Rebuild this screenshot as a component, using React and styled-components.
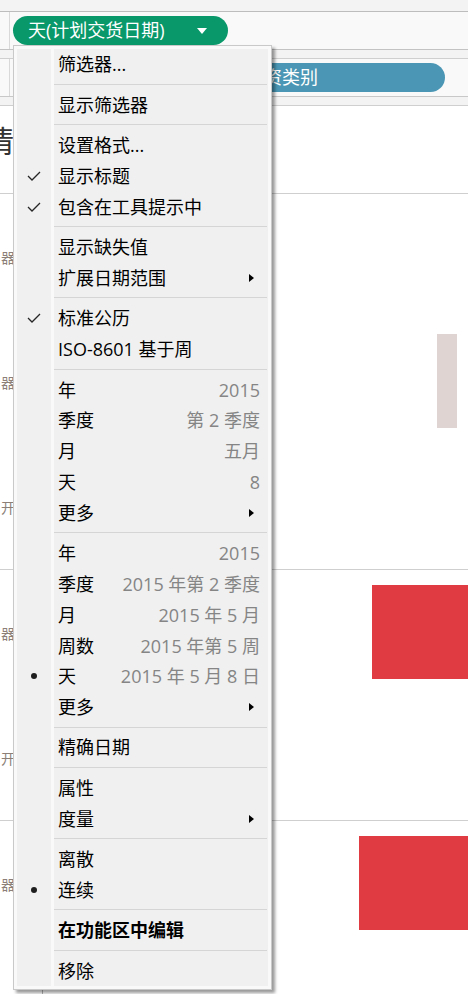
import React from 'react';
import styled, { createGlobalStyle } from 'styled-components';

const GlobalStyle = createGlobalStyle`
  html, body {
    margin: 0;
    padding: 0;
    background: #ffffff;
  }
  body {
    font-family: "Open Sans", "Noto Sans CJK SC", sans-serif;
    overflow: hidden;
  }
`;

const Page = styled.div`
  position: relative;
  width: 468px;
  height: 994px;
  display: flex;
  flex-direction: column;
  overflow: hidden;
`;

const TopStrip = styled.div`
  height: 11px;
  background: #f3f3f3;
  border-bottom: 1px solid #bdbdbd;
`;

const Shelf = styled.div`
  height: 37px;
  background: #f9f9f9;
  border-bottom: 1px solid ${p => p.$line};
  display: flex;
  align-items: flex-start;
`;

const ShelfHandle = styled.div`
  width: 9px;
  align-self: stretch;
  border-right: 1px solid #d9d9d9;
`;

const ShelfGap = styled.div`
  height: 8px;
  background: #f3f3f3;
  border-bottom: 1px solid #cfcfcf;
`;

const Pill = styled.div`
  box-sizing: border-box;
  margin-top: 4px;
  margin-left: ${p => p.$offset}px;
  width: ${p => p.$width}px;
  height: 29px;
  padding-left: ${p => p.$pad}px;
  border-radius: 15px;
  background: ${p => p.$color};
  color: #ffffff;
  font-size: 18px;
  line-height: 29px;
  display: flex;
  align-items: center;
  white-space: nowrap;
`;

const PillCaret = styled.span`
  margin-left: auto;
  margin-right: 21px;
  width: 0;
  height: 0;
  border-left: 5px solid transparent;
  border-right: 5px solid transparent;
  border-top: 6px solid #ffffff;
`;

const Table = styled.div`
  flex: 1;
  display: flex;
  flex-direction: column;
  background: #ffffff;
`;

const TitleBand = styled.div`
  height: 87px;
  border-bottom: 1px solid #cfcfcf;
  overflow: hidden;
`;

const Title = styled.div`
  margin-left: -16px;
  padding-top: 20px;
  font-size: 30px;
  line-height: 1;
  color: #333333;
`;

const Section = styled.div`
  border-bottom: 1px solid #cfcfcf;
`;

const Row = styled.div`
  height: 125px;
  display: grid;
  grid-template-columns: 43px 1fr;
`;

const Filler = styled.div`
  flex: 1;
  display: grid;
  grid-template-columns: 43px 1fr;
`;

const Label = styled.div`
  border-right: 1px solid #b4b4b4;
  display: flex;
  align-items: center;
  padding-left: 1px;
  font-size: 14px;
  color: #8c7f78;
  white-space: nowrap;
  overflow: hidden;
`;

const BarCell = styled.div`
  padding: 15px 0;
`;

const Bar = styled.div`
  height: 94px;
  background: ${p => p.$color};
`;

const Menu = styled.div`
  position: absolute;
  left: 13px;
  top: 45px;
  width: 259px;
  box-sizing: border-box;
  padding: 3px;
  border: 1px solid #c9c9c9;
  background: #f9f9f9;
  box-shadow: 3px 3px 3px rgba(0, 0, 0, 0.4);
`;

const MenuInner = styled.div`
  background: #f0f0f0;
`;

const Item = styled.div`
  display: grid;
  grid-template-columns: 34px 1fr;
  height: 30.8px;
`;

const Gutter = styled.div`
  display: flex;
  align-items: center;
  justify-content: center;
`;

const ItemBody = styled.div`
  border-left: 3px solid #f9f9f9;
  display: flex;
  align-items: center;
  padding: 0 8px 0 4px;
  font-size: 18px;
  line-height: 30px;
  color: #000000;
  font-weight: ${p => (p.$bold ? 700 : 400)};
  white-space: nowrap;
`;

const Value = styled.span`
  margin-left: auto;
  color: #858585;
`;

const SubArrow = styled.span`
  margin-left: auto;
  margin-right: 6px;
  width: 0;
  height: 0;
  border-top: 4px solid transparent;
  border-bottom: 4px solid transparent;
  border-left: 5px solid #000000;
`;

const Separator = styled.div`
  display: grid;
  grid-template-columns: 34px 1fr;
  height: 9.6px;
`;

const SeparatorLine = styled.div`
  border-left: 3px solid #f9f9f9;
  &::after {
    content: '';
    display: block;
    margin-top: 4px;
    margin-right: 1px;
    height: 1px;
    background: #d5d5d5;
  }
`;

const Dot = styled.span`
  width: 6px;
  height: 6px;
  border-radius: 50%;
  background: #1e1e1e;
`;

const Check = () => (
  <svg width="14" height="10" viewBox="0 0 14 10">
    <polyline points="1,5 5,9 13,1" fill="none" stroke="#262626" strokeWidth="1.3" />
  </svg>
);

const menuGroups = [
  [{ label: '筛选器...' }],
  [{ label: '显示筛选器' }],
  [
    { label: '设置格式...' },
    { label: '显示标题', mark: 'check' },
    { label: '包含在工具提示中', mark: 'check' },
  ],
  [{ label: '显示缺失值' }, { label: '扩展日期范围', sub: true }],
  [{ label: '标准公历', mark: 'check' }, { label: 'ISO-8601 基于周' }],
  [
    { label: '年', value: '2015' },
    { label: '季度', value: '第 2 季度' },
    { label: '月', value: '五月' },
    { label: '天', value: '8' },
    { label: '更多', sub: true },
  ],
  [
    { label: '年', value: '2015' },
    { label: '季度', value: '2015 年第 2 季度' },
    { label: '月', value: '2015 年 5 月' },
    { label: '周数', value: '2015 年第 5 周' },
    { label: '天', value: '2015 年 5 月 8 日', mark: 'dot' },
    { label: '更多', sub: true },
  ],
  [{ label: '精确日期' }],
  [{ label: '属性' }, { label: '度量', sub: true }],
  [{ label: '离散' }, { label: '连续', mark: 'dot' }],
  [{ label: '在功能区中编辑', bold: true }],
  [{ label: '移除' }],
];

const sections = [
  [
    { label: '器材' },
    { label: '器材', bar: { left: 394, width: 20, color: '#dfd4d2' } },
    { label: '开关' },
  ],
  [
    { label: '器材', bar: { left: 329, width: 96, color: '#e03a42' } },
    { label: '开关' },
  ],
];

const MenuItem = ({ item }) => (
  <Item>
    <Gutter>
      {item.mark === 'check' && <Check />}
      {item.mark === 'dot' && <Dot />}
    </Gutter>
    <ItemBody $bold={item.bold}>
      {item.label}
      {item.value && <Value>{item.value}</Value>}
      {item.sub && <SubArrow />}
    </ItemBody>
  </Item>
);

const TableRow = ({ row }) => (
  <Row>
    <Label>{row.label}</Label>
    <BarCell>
      {row.bar && (
        <Bar
          $color={row.bar.color}
          style={{ marginLeft: row.bar.left, width: row.bar.width }}
        />
      )}
    </BarCell>
  </Row>
);

export default function App() {
  return (
    <Page>
      <GlobalStyle />
      <TopStrip />
      <Shelf $line="#c3c3c3">
        <ShelfHandle />
        <Pill $color="#08986a" $offset={3} $width={215} $pad={15}>
          天(计划交货日期)
          <PillCaret />
        </Pill>
      </Shelf>
      <ShelfGap />
      <Shelf $line="#c8c8c8">
        <ShelfHandle />
        <Pill $color="#4a96b4" $offset={222} $width={213} $pad={14}>
          物资类别
        </Pill>
      </Shelf>
      <ShelfGap />

      <Table>
        <TitleBand>
          <Title>情</Title>
        </TitleBand>
        {sections.map((rows, i) => (
          <Section key={i}>
            {rows.map((row, j) => (
              <TableRow key={j} row={row} />
            ))}
          </Section>
        ))}
        <TableRow row={{ label: '器材', bar: { left: 316, width: 109, color: '#e03a42' } }} />
        <Filler>
          <Label />
          <div />
        </Filler>
      </Table>

      <Menu>
        <MenuInner>
          {menuGroups.map((group, i) => (
            <React.Fragment key={i}>
              {i > 0 && (
                <Separator>
                  <div />
                  <SeparatorLine />
                </Separator>
              )}
              {group.map((item, j) => (
                <MenuItem key={j} item={item} />
              ))}
            </React.Fragment>
          ))}
        </MenuInner>
      </Menu>
    </Page>
  );
}
